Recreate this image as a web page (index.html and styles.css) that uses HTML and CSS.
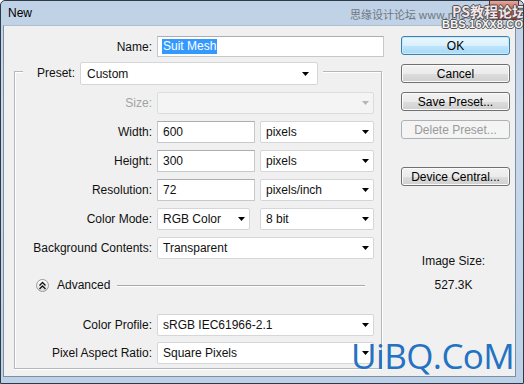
FILE: index.html
```html
<!DOCTYPE html>
<html>
<head>
<meta charset="utf-8">
<link rel="stylesheet" href="styles.css">
</head>
<body>
<div class="window">
  <div class="titlebar">
    <span class="title">New</span>
  </div>
  <div class="wm-cn">思缘设计论坛 www.missyuan.com</div>
  <div class="close-btn"></div>
  <div class="wm-ps">PS教程论坛</div>
  <div class="wm-bbs">BBS.16XX8.COM</div>

  <div class="body">
    <div class="form">
      <div class="name-row">
        <span class="lbl name-lbl">Name:</span>
        <div class="input name-input"><span class="sel">Suit Mesh</span></div>
      </div>

      <div class="group">
        <div class="group-head">
          <span class="preset-lbl">Preset:</span>
          <div class="select preset-sel">Custom<svg class="arrow" width="7" height="4" viewBox="0 0 7 4"><polygon points="0,0 7,0 3.5,4"/></svg></div>
          <span class="head-gap"></span>
        </div>

        <div class="row first">
          <span class="lbl disabled">Size:</span>
          <div class="select full dis"><svg class="arrow" width="7" height="4" viewBox="0 0 7 4"><polygon points="0,0 7,0 3.5,4"/></svg></div>
        </div>
        <div class="row">
          <span class="lbl">Width:</span>
          <div class="input num">600</div>
          <div class="select unit">pixels<svg class="arrow" width="7" height="4" viewBox="0 0 7 4"><polygon points="0,0 7,0 3.5,4"/></svg></div>
        </div>
        <div class="row">
          <span class="lbl">Height:</span>
          <div class="input num">300</div>
          <div class="select unit">pixels<svg class="arrow" width="7" height="4" viewBox="0 0 7 4"><polygon points="0,0 7,0 3.5,4"/></svg></div>
        </div>
        <div class="row">
          <span class="lbl">Resolution:</span>
          <div class="input num">72</div>
          <div class="select unit">pixels/inch<svg class="arrow" width="7" height="4" viewBox="0 0 7 4"><polygon points="0,0 7,0 3.5,4"/></svg></div>
        </div>
        <div class="row">
          <span class="lbl">Color Mode:</span>
          <div class="select mode">RGB Color<svg class="arrow" width="7" height="4" viewBox="0 0 7 4"><polygon points="0,0 7,0 3.5,4"/></svg></div>
          <div class="select unit bits">8 bit<svg class="arrow" width="7" height="4" viewBox="0 0 7 4"><polygon points="0,0 7,0 3.5,4"/></svg></div>
        </div>
        <div class="row">
          <span class="lbl">Background Contents:</span>
          <div class="select full">Transparent<svg class="arrow" width="7" height="4" viewBox="0 0 7 4"><polygon points="0,0 7,0 3.5,4"/></svg></div>
        </div>

        <div class="advanced">
          <span class="adv-btn"><svg width="9" height="9" viewBox="0 0 9 9"><polyline points="1.5,4.5 4.5,1.5 7.5,4.5" fill="none" stroke="#111" stroke-width="1.3"/><polyline points="1.5,8 4.5,5 7.5,8" fill="none" stroke="#111" stroke-width="1.3"/></svg></span>
          <span class="adv-text">Advanced</span>
          <span class="adv-line"></span>
        </div>

        <div class="row profile">
          <span class="lbl">Color Profile:</span>
          <div class="select full">sRGB IEC61966-2.1<svg class="arrow" width="7" height="4" viewBox="0 0 7 4"><polygon points="0,0 7,0 3.5,4"/></svg></div>
        </div>
        <div class="row pixel">
          <span class="lbl">Pixel Aspect Ratio:</span>
          <div class="select full">Square Pixels<svg class="arrow" width="7" height="4" viewBox="0 0 7 4"><polygon points="0,0 7,0 3.5,4"/></svg></div>
        </div>
      </div>
    </div>

    <div class="side">
      <div class="btn default">OK</div>
      <div class="btn">Cancel</div>
      <div class="btn">Save Preset...</div>
      <div class="btn disabled-btn">Delete Preset...</div>
      <div class="btn device">Device Central...</div>
      <div class="img-size">
        <div>Image Size:</div>
        <div class="size-val">527.3K</div>
      </div>
    </div>
  </div>

  <div class="uibq">UiBQ.CoM</div>
</div>
</body>
</html>
```

FILE: styles.css
```css
body {
  margin: 0;
  font-family: "Liberation Sans", Arial, sans-serif;
  font-size: 12px;
  color: #111;
}

.window {
  position: relative;
  width: 524px;
  height: 384px;
  box-sizing: border-box;
  border: 1px solid #2f3a47;
  border-radius: 5px 5px 0 0;
  background: linear-gradient(#bfd1e6, #c9d9ea 30%, #bcd1e8);
  padding: 0 7px 6px 2px;
  display: flex;
  flex-direction: column;
  overflow: hidden;
}

.titlebar {
  height: 24px;
  flex: none;
  display: flex;
  align-items: center;
  padding-left: 5px;
}

.title {
  font-size: 12px;
  color: #000;
}

.wm-cn {
  position: absolute;
  left: 349px;
  top: 6px;
  font-family: "Noto Sans CJK SC", "Liberation Sans", sans-serif;
  font-size: 11px;
  line-height: 15px;
  color: #6f7780;
  white-space: nowrap;
}

.close-btn {
  position: absolute;
  left: 488px;
  top: 0;
  width: 28px;
  height: 18px;
  border: 1px solid #6b2b2b;
  border-top: none;
  border-radius: 0 0 4px 4px;
  background: linear-gradient(#e6a89b, #c75a4a 50%, #b53a2a);
}

.wm-ps {
  position: absolute;
  left: 451px;
  top: 2px;
  font-family: "Noto Sans CJK SC", sans-serif;
  font-size: 14px;
  line-height: 16px;
  font-weight: bold;
  color: #f4e6ea;
  text-shadow: 0 0 1px #333, 1px 0 0 #555, -1px 0 0 #555, 0 1px 0 #555, 0 -1px 0 #555;
  white-space: nowrap;
}

.wm-bbs {
  position: absolute;
  left: 441px;
  top: 17px;
  font-family: "Liberation Sans", sans-serif;
  font-size: 11px;
  line-height: 12px;
  font-weight: bold;
  color: #f4f4f4;
  letter-spacing: 0.2px;
  text-shadow: 1px 0 0 #555, -1px 0 0 #555, 0 1px 0 #555, 0 -1px 0 #555;
  white-space: nowrap;
}

.body {
  flex: 1;
  background: #f0f0f0;
  border: 1px solid #7d8fa3;
  border-top: 1px solid #aebfd2;
  display: flex;
}

.form {
  width: 397px;
  flex: none;
  padding-top: 10px;
}

.name-row {
  display: flex;
  align-items: center;
  height: 21px;
}

.lbl {
  text-align: right;
  white-space: nowrap;
}

.name-lbl {
  width: 148px;
  margin-right: 5px;
}

.input {
  box-sizing: border-box;
  height: 22px;
  background: #fff;
  border: 1px solid #c6c9cc;
  border-top-color: #abadb3;
  display: flex;
  align-items: center;
  padding-left: 5px;
  white-space: nowrap;
}

.name-input {
  width: 227px;
  height: 21px;
  padding-left: 4px;
}

.sel {
  background: #3399ff;
  color: #fff;
  padding: 1px 1px;
  line-height: 13px;
}

.group {
  margin: 14px 0 0 10px;
  width: 368px;
  box-sizing: border-box;
  border: 1px solid #b4b8bc;
  box-shadow: inset 1px 1px 0 #fff, 1px 1px 0 #fff;
  padding-bottom: 4px;
}

.group-head {
  display: flex;
  align-items: center;
  height: 23px;
  margin-top: -10px;
  margin-left: 8px;
}

.preset-lbl {
  background: #f0f0f0;
  padding-left: 14px;
  width: 43px;
  height: 23px;
  line-height: 23px;
}

.head-gap {
  width: 5px;
  height: 23px;
  background: #f0f0f0;
}

.select {
  position: relative;
  box-sizing: border-box;
  height: 22px;
  background: #fff;
  border: 1px solid #d4d6d9;
  border-radius: 2px;
  display: flex;
  align-items: center;
  padding-left: 5px;
  white-space: nowrap;
}

.arrow {
  margin-left: auto;
  margin-right: 4px;
  fill: #000;
}

.preset-sel {
  width: 238px;
  height: 23px;
  padding-left: 6px;
}

.preset-sel .arrow {
  margin-right: 8px;
}

.row {
  display: flex;
  align-items: center;
  height: 22px;
  margin-top: 7px;
}

.row .lbl {
  width: 137px;
  margin-right: 5px;
}

.row.first {
  margin-top: 7px;
}

.disabled {
  color: #a3a3a3;
}

.full {
  width: 217px;
}

.dis {
  background: #f4f4f4;
  border-color: #dadcde;
}

.dis .arrow {
  fill: #b5b5b5;
}

.num {
  width: 98px;
  margin-right: 5px;
}

.unit {
  width: 114px;
}

.mode {
  width: 93px;
  margin-right: 10px;
}

.advanced {
  display: flex;
  align-items: center;
  height: 20px;
  margin-top: 16px;
  padding-left: 21px;
}

.adv-btn {
  width: 13px;
  height: 13px;
  box-sizing: border-box;
  border: 1px solid #9a9a9a;
  border-radius: 50%;
  background: linear-gradient(#ffffff, #dcdcdc);
  display: flex;
  align-items: center;
  justify-content: center;
}

.adv-text {
  margin-left: 8px;
}

.adv-line {
  flex: 1;
  height: 1px;
  background: #a8a8a8;
  box-shadow: 0 1px 0 #fff;
  margin: 0 16px 0 7px;
}

.row.profile {
  margin-top: 19px;
}

.row.pixel {
  margin-top: 6px;
}

.side {
  width: 109px;
  flex: none;
  padding-top: 10px;
  display: flex;
  flex-direction: column;
}

.btn {
  box-sizing: border-box;
  height: 19px;
  margin-bottom: 9px;
  border: 1px solid #707070;
  border-radius: 3px;
  background: linear-gradient(#f2f2f2 0%, #ebebeb 50%, #dddddd 51%, #cfcfcf 100%);
  box-shadow: inset 0 0 0 1px #fbfbfb;
  display: flex;
  align-items: center;
  justify-content: center;
  color: #000;
  white-space: nowrap;
}

.btn.default {
  border-color: #3c7fb1;
  background: linear-gradient(#eaf6fd 0%, #d9f0fc 50%, #bee6fd 51%, #a7d9f5 100%);
  box-shadow: inset 0 0 0 1px #c6ecfb;
}

.btn.disabled-btn {
  border-color: #adb2b5;
  background: #f4f4f4;
  box-shadow: none;
  color: #9a9a9a;
}

.btn.device {
  margin-top: 19px;
}

.img-size {
  margin-top: 59px;
  text-align: center;
  line-height: 14px;
  padding-right: 4px;
}

.size-val {
  margin-top: 10px;
}

.uibq {
  position: absolute;
  left: 350px;
  top: 333px;
  font-family: "Open Sans", "DejaVu Sans", sans-serif;
  font-size: 35px;
  line-height: 44px;
  color: #2372c3;
  letter-spacing: -0.6px;
  white-space: nowrap;
}
```
